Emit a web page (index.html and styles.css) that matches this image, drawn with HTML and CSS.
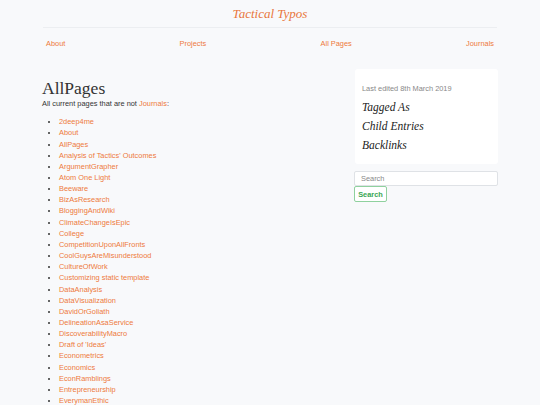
FILE: index.html
```html
<!DOCTYPE html>
<html lang="en">
<head>
    <meta charset="UTF-8">
    <meta name="viewport" content="width=device-width, initial-scale=1.0">
    <title>AllPages - Tactical Typos</title>
    <link rel="stylesheet" href="styles.css">
</head>
<body>

    <header class="site-header">
        <h1 class="site-title"><a href="index.html">Tactical Typos</a></h1>
        <nav class="site-nav">
            <a href="about.html">About</a>
            <a href="projects.html">Projects</a>
            <a href="allpages.html">All Pages</a>
            <a href="journals.html">Journals</a>
        </nav>
    </header>

    <div class="page">
        <main class="content">
            <h1 class="page-title">AllPages</h1>
            <p class="intro">All current pages that are not <a href="journals.html">Journals</a>:</p>
            <ul class="page-list">
                <li><a href="#">2deep4me</a></li>
                <li><a href="#">About</a></li>
                <li><a href="#">AllPages</a></li>
                <li><a href="#">Analysis of Tactics' Outcomes</a></li>
                <li><a href="#">ArgumentGrapher</a></li>
                <li><a href="#">Atom One Light</a></li>
                <li><a href="#">Beeware</a></li>
                <li><a href="#">BizAsResearch</a></li>
                <li><a href="#">BloggingAndWiki</a></li>
                <li><a href="#">ClimateChangeIsEpic</a></li>
                <li><a href="#">College</a></li>
                <li><a href="#">CompetitionUponAllFronts</a></li>
                <li><a href="#">CoolGuysAreMisunderstood</a></li>
                <li><a href="#">CultureOfWork</a></li>
                <li><a href="#">Customizing static template</a></li>
                <li><a href="#">DataAnalysis</a></li>
                <li><a href="#">DataVisualization</a></li>
                <li><a href="#">DavidOrGoliath</a></li>
                <li><a href="#">DelineationAsaService</a></li>
                <li><a href="#">DiscoverabilityMacro</a></li>
                <li><a href="#">Draft of 'Ideas'</a></li>
                <li><a href="#">Econometrics</a></li>
                <li><a href="#">Economics</a></li>
                <li><a href="#">EconRamblings</a></li>
                <li><a href="#">Entrepreneurship</a></li>
                <li><a href="#">EverymanEthic</a></li>
                <li><a href="#">Forecasting</a></li>
                <li><a href="#">Gardening</a></li>
            </ul>
        </main>

        <aside class="sidebar">
            <div class="meta-box">
                <p class="last-edited">Last edited 8th March 2019</p>
                <h3>Tagged As</h3>
                <h3>Child Entries</h3>
                <h3>Backlinks</h3>
            </div>
            <form class="search-form">
                <input type="text" name="q" placeholder="Search">
                <button type="submit">Search</button>
            </form>
        </aside>
    </div>

</body>
</html>
```

FILE: styles.css
```css
body {
    font-family: "Liberation Sans", Arial, sans-serif;
    font-size: 7.4px;
    line-height: 11.1px;
    background-color: #f8f9fb;
    color: #333;
    margin: 0;
}

a {
    color: #ee7a3b;
    text-decoration: none;
}

.site-header {
    width: 454px;
    margin: 0 auto;
}

.site-title {
    margin: 0;
    padding-top: 6px;
    padding-bottom: 6px;
    font-family: "Liberation Serif", Georgia, serif;
    font-style: italic;
    font-weight: normal;
    font-size: 13px;
    line-height: 15px;
    text-align: center;
    border-bottom: 1px solid #eceef1;
}

.site-title a {
    color: #e8773d;
}

.site-nav {
    display: flex;
    justify-content: space-between;
    padding: 10px 3px 0 3px;
}

.page {
    width: 456px;
    margin: 20px auto 0 auto;
    display: grid;
    grid-template-columns: 1fr 144px;
    gap: 12px;
}

.page-title {
    margin: 10px 0 0 0;
    font-family: "Liberation Serif", Georgia, serif;
    font-weight: normal;
    font-size: 17.5px;
    line-height: 19px;
    color: #333;
}

.intro {
    margin: 0;
}

.page-list {
    margin: 7px 0 0 0;
    padding-left: 17px;
    line-height: 11.15px;
}

.meta-box {
    background-color: #fff;
    border-radius: 3px;
    padding: 14px 7px 9px 7px;
    margin-left: 1px;
}

.last-edited {
    margin: 0 0 4px 0;
    color: #888;
}

.meta-box h3 {
    margin: 0;
    font-family: "Liberation Serif", Georgia, serif;
    font-style: italic;
    font-weight: normal;
    font-size: 11.5px;
    line-height: 19px;
    color: #222;
}

.search-form {
    margin-top: 7px;
}

.search-form input {
    display: block;
    box-sizing: border-box;
    width: 100%;
    height: 15px;
    margin: 0;
    padding: 0 6px;
    border: 1px solid #dfe2e6;
    border-radius: 2px;
    background: #fff;
    font-family: "Liberation Sans", Arial, sans-serif;
    font-size: 7.4px;
}

.search-form input::placeholder {
    color: #888;
}

.search-form button {
    display: block;
    box-sizing: border-box;
    width: 33px;
    height: 16px;
    margin: 0;
    padding: 0;
    background: #fff;
    border: 1px solid #8fd19e;
    border-radius: 2px;
    color: #3aa654;
    font-family: "Liberation Sans", Arial, sans-serif;
    font-size: 7.4px;
    font-weight: bold;
}
```
